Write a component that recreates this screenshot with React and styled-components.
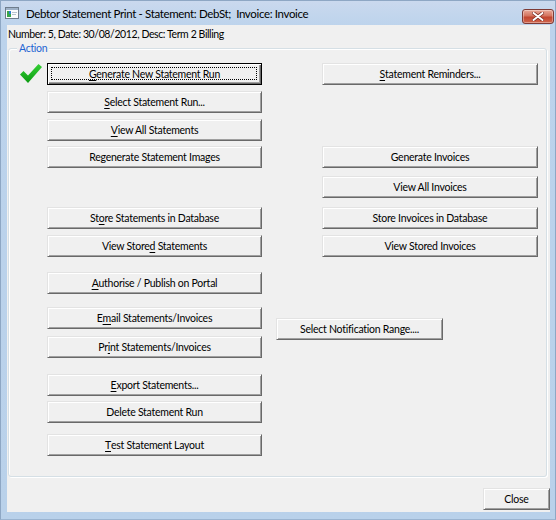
import React from 'react'
import styled, { createGlobalStyle, css } from 'styled-components'

const GlobalStyle = createGlobalStyle`
  html, body {
    margin: 0;
    padding: 0;
    background: #b9d1ea;
  }
`

const uiFont = `Lato, 'Noto Sans', sans-serif`

const Window = styled.div`
  width: 556px;
  height: 520px;
  box-sizing: border-box;
  display: flex;
  flex-direction: column;
  background: linear-gradient(to bottom, #cad9ee 0px, #bcd3ec 26px, #b9d1ea 100%);
  border: 1px solid #8ea7c4;
  border-bottom-color: #9bb4d0;
`

const TitleBar = styled.div`
  height: 24px;
  display: flex;
  align-items: center;
  padding: 0 1px 0 4px;
  font-family: ${uiFont};
  font-size: 11.5px;
  letter-spacing: -0.35px;
  color: #000;
`

const TitleText = styled.span`
  margin-left: 7px;
  flex: 1;
  white-space: pre;
`

const CloseBox = styled.div`
  width: 30px;
  height: 13px;
  margin-top: 6px;
  border: 1px solid #7d3a35;
  border-radius: 3px;
  background: linear-gradient(to bottom, #e9a898 0%, #d4735e 45%, #c2452f 55%, #d0654c 100%);
  display: flex;
  align-items: center;
  justify-content: center;
  box-shadow: inset 0 0 0 1px rgba(255, 255, 255, 0.35);
`

const Client = styled.div`
  flex: 1;
  margin: 0 5px 7px 6px;
  background: #f0f0f0;
  display: flex;
  flex-direction: column;
  font-family: ${uiFont};
  font-size: 10.5px;
  letter-spacing: -0.25px;
  color: #000;
`

const InfoLine = styled.div`
  padding: 1px 0 0 1px;
  height: 16px;
  line-height: 16px;
  letter-spacing: -0.4px;
`

const GroupBox = styled.div`
  position: relative;
  margin: 6px 3px 0 1px;
  border: 1px solid #d5dfe5;
  border-radius: 3px;
  box-shadow: inset 1px 1px 0 #fff, 1px 1px 0 #fff;
  padding: 14px 0 20px 0;
  display: flex;
`

const Caption = styled.span`
  position: absolute;
  top: -7px;
  left: 8px;
  padding: 0 2px;
  background: #f0f0f0;
  color: #1e64d3;
  line-height: 12px;
  letter-spacing: -0.3px;
`

const LeftColumn = styled.div`
  display: flex;
  flex-direction: column;
`

const Line = styled.div`
  display: flex;
  align-items: center;
  margin-top: ${p => p.$gap}px;
`

const TickSlot = styled.div`
  width: 38px;
  height: 22px;
  box-sizing: border-box;
  padding: 1px 0 0 11px;
`

const RightColumn = styled.div`
  display: flex;
  flex-direction: column;
  align-items: flex-start;
  margin-left: 14px;
`

const Button = styled.div`
  box-sizing: border-box;
  width: ${p => p.$w || 215}px;
  height: 22px;
  margin-top: ${p => p.$gap || 0}px;
  margin-left: ${p => p.$indent || 0}px;
  display: flex;
  align-items: center;
  justify-content: center;
  background: #f0f0f0;
  border: 1px solid;
  border-color: #e3e3e3 #696969 #696969 #e3e3e3;
  box-shadow: inset 1px 1px 0 #fff, inset -1px -1px 0 #a0a0a0;
  white-space: pre;
  cursor: default;
  padding-bottom: 1px;
  ${p =>
    p.$focused &&
    css`
      position: relative;
      border-color: #000;
      box-shadow: inset 1px 1px 0 #fff, inset -1px -1px 0 #696969, inset -2px -2px 0 #a0a0a0;
      &::after {
        content: '';
        position: absolute;
        inset: 3px 4px 4px 3px;
        border: 1px dotted #000;
      }
    `}
`

const Key = styled.span`
  text-decoration: underline;
  text-underline-offset: 2px;
  text-decoration-thickness: 1px;
`

const Footer = styled.div`
  display: flex;
  justify-content: flex-end;
  margin-top: 11px;
`

function Label({ text, k }) {
  if (k === undefined) return text
  return (
    <>
      {text.slice(0, k)}
      <Key>{text[k]}</Key>
      {text.slice(k + 1)}
    </>
  )
}

const AppIcon = () => (
  <svg width="14" height="12" viewBox="0 0 14 12">
    <rect x="0.5" y="0.5" width="13" height="11" fill="#fdfdfd" stroke="#6f7d8c" />
    <rect x="1" y="1" width="12" height="2" fill="#9fb2c8" />
    <rect x="2" y="4" width="4" height="6" fill="#3aa54a" />
    <rect x="4" y="4" width="2" height="3" fill="#2f7fd0" />
    <rect x="7" y="5" width="5" height="1" fill="#b8c4d0" />
    <rect x="7" y="7" width="4" height="1" fill="#b8c4d0" />
  </svg>
)

const CloseGlyph = () => (
  <svg width="12" height="9" viewBox="0 0 12 9">
    <path d="M1.5 1 L10.5 8 M10.5 1 L1.5 8" stroke="#7a2a22" strokeWidth="3.4" strokeLinecap="round" />
    <path d="M1.5 1 L10.5 8 M10.5 1 L1.5 8" stroke="#fff" strokeWidth="2" strokeLinecap="round" />
  </svg>
)

const Tick = () => (
  <svg width="22" height="20" viewBox="0 0 22 20">
    <defs>
      <linearGradient id="tickFill" x1="0" y1="0" x2="0" y2="1">
        <stop offset="0" stopColor="#35d035" />
        <stop offset="1" stopColor="#0c9a12" />
      </linearGradient>
    </defs>
    <polygon points="0,10.5 3.5,7 8,11.5 18.5,0 22,3 8,19" fill="url(#tickFill)" />
  </svg>
)

const leftButtons = [
  { text: 'Generate New Statement Run', k: 0, gap: 0, focused: true, tick: true },
  { text: 'Select Statement Run...', k: 0, gap: 6 },
  { text: 'View All Statements', k: 0, gap: 6 },
  { text: 'Regenerate Statement Images', gap: 5 },
  { text: 'Store Statements in Database', k: 2, gap: 39 },
  { text: 'View Stored Statements', k: 10, gap: 6 },
  { text: 'Authorise / Publish on Portal', k: 0, gap: 15 },
  { text: 'Email Statements/Invoices', k: 1, gap: 13 },
  { text: 'Print Statements/Invoices', k: 2, gap: 7 },
  { text: 'Export Statements...', k: 0, gap: 16 },
  { text: 'Delete Statement Run', gap: 5 },
  { text: 'Test Statement Layout', k: 0, gap: 11 },
]

const rightButtons = [
  { text: 'Statement Reminders...', k: 0, gap: 0, indent: 46, w: 216 },
  { text: 'Generate Invoices', gap: 61, indent: 46, w: 216 },
  { text: 'View All Invoices', gap: 8, indent: 46, w: 216 },
  { text: 'Store Invoices in Database', gap: 9, indent: 46, w: 216 },
  { text: 'View Stored Invoices', gap: 6, indent: 46, w: 216 },
  { text: 'Select Notification Range....', gap: 61, indent: 0, w: 167 },
]

export default function App() {
  return (
    <>
      <GlobalStyle />
      <Window>
        <TitleBar>
          <AppIcon />
          <TitleText>Debtor Statement Print - Statement: DebSt;  Invoice: Invoice</TitleText>
          <CloseBox>
            <CloseGlyph />
          </CloseBox>
        </TitleBar>
        <Client>
          <InfoLine>Number: 5, Date: 30/08/2012, Desc: Term 2 Billing</InfoLine>
          <GroupBox>
            <Caption>Action</Caption>
            <LeftColumn>
              {leftButtons.map(b => (
                <Line key={b.text} $gap={b.gap}>
                  <TickSlot>{b.tick && <Tick />}</TickSlot>
                  <Button $focused={b.focused}>
                    <Label text={b.text} k={b.k} />
                  </Button>
                </Line>
              ))}
            </LeftColumn>
            <RightColumn>
              {rightButtons.map(b => (
                <Button key={b.text} $gap={b.gap} $indent={b.indent} $w={b.w}>
                  <Label text={b.text} k={b.k} />
                </Button>
              ))}
            </RightColumn>
          </GroupBox>
          <Footer>
            <Button $w={67}>Close</Button>
          </Footer>
        </Client>
      </Window>
    </>
  )
}
